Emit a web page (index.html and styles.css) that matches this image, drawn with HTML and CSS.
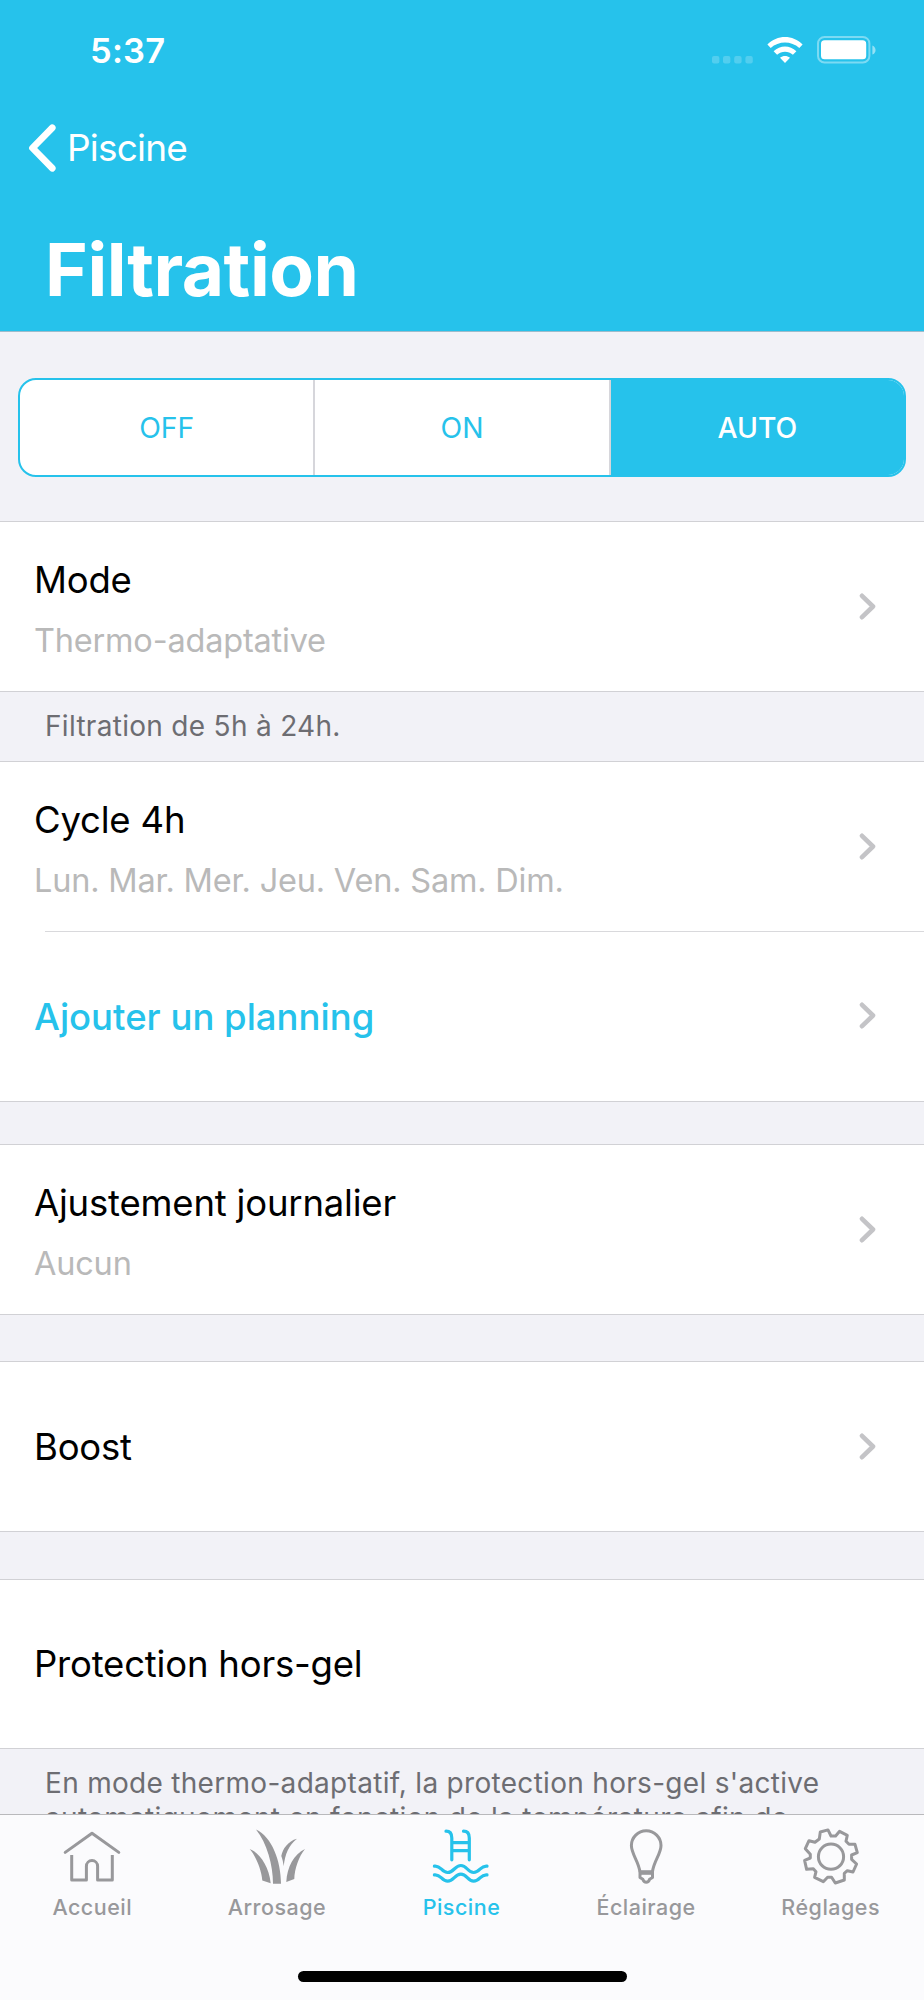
FILE: index.html
```
<!DOCTYPE html>
<html lang="fr">
<head>
    <meta charset="UTF-8">
    <meta name="viewport" content="width=device-width, initial-scale=1.0">
    <title>Filtration</title>
    <link rel="stylesheet" href="styles.css">
</head>
<body>
    <div class="app">
        <header class="header">
            <div class="status-bar">
                <span class="time">5:37</span>
                <div class="status-icons">
                    <svg class="signal" viewBox="0 0 42 8" width="42" height="8">
                        <rect x="0" y="0" width="7.4" height="7.4" rx="2"/>
                        <rect x="11" y="0" width="7.4" height="7.4" rx="2"/>
                        <rect x="22.2" y="0" width="7.4" height="7.4" rx="2"/>
                        <rect x="33.4" y="0" width="7.4" height="7.4" rx="2"/>
                    </svg>
                    <svg class="wifi" viewBox="0 0 36 27" width="36" height="27">
                        <path d="M0.4 7.6C10 -2.4 26 -2.4 35.6 7.6L32.3 11.1C24.3 3.7 11.7 3.7 3.7 11.1Z"/>
                        <path d="M6.6 14.2C13 7.8 23 7.8 29.4 14.2L25.9 17.7C21.4 13.7 14.6 13.7 10.1 17.7Z"/>
                        <path d="M13 20.8C16 18.3 20 18.3 23 20.8L18 26Z"/>
                    </svg>
                    <svg class="battery" viewBox="0 0 60 28" width="60" height="28">
                        <rect class="battery-frame" x="1" y="1" width="51.4" height="25.4" rx="6.5"/>
                        <rect x="4" y="4.3" width="45.2" height="19" rx="3.6"/>
                        <path class="battery-cap" d="M55.4 9.4C59.6 11 59.6 17 55.4 18.6Z"/>
                    </svg>
                </div>
            </div>
            <a class="back" href="#">
                <svg viewBox="0 0 28 48" width="28" height="48"><path d="M24.2 3.8L4.5 24L24.2 44.2"/></svg>
                <span>Piscine</span>
            </a>
            <h1>Filtration</h1>
        </header>

        <main class="content">
            <div class="segmented">
                <button type="button" class="segment">OFF</button>
                <button type="button" class="segment">ON</button>
                <button type="button" class="segment active">AUTO</button>
            </div>

            <section class="group">
                <a class="row detailed" href="#">
                    <div class="row-text">
                        <span class="title">Mode</span>
                        <span class="subtitle">Thermo-adaptative</span>
                    </div>
                    <svg class="chevron" viewBox="0 0 18 28" width="18" height="28"><path d="M3 2.8L14 13.5L3 24.2"/></svg>
                </a>
            </section>
            <p class="note note-short">Filtration de 5h à 24h.</p>

            <section class="group">
                <a class="row detailed" href="#">
                    <div class="row-text">
                        <span class="title">Cycle 4h</span>
                        <span class="subtitle">Lun. Mar. Mer. Jeu. Ven. Sam. Dim.</span>
                    </div>
                    <svg class="chevron" viewBox="0 0 18 28" width="18" height="28"><path d="M3 2.8L14 13.5L3 24.2"/></svg>
                </a>
                <a class="row separated" href="#">
                    <div class="row-text">
                        <span class="title action">Ajouter un planning</span>
                    </div>
                    <svg class="chevron" viewBox="0 0 18 28" width="18" height="28"><path d="M3 2.8L14 13.5L3 24.2"/></svg>
                </a>
            </section>

            <section class="group group-adjust">
                <a class="row detailed" href="#">
                    <div class="row-text">
                        <span class="title">Ajustement journalier</span>
                        <span class="subtitle">Aucun</span>
                    </div>
                    <svg class="chevron" viewBox="0 0 18 28" width="18" height="28"><path d="M3 2.8L14 13.5L3 24.2"/></svg>
                </a>
            </section>

            <section class="group group-boost">
                <a class="row" href="#">
                    <div class="row-text">
                        <span class="title">Boost</span>
                    </div>
                    <svg class="chevron" viewBox="0 0 18 28" width="18" height="28"><path d="M3 2.8L14 13.5L3 24.2"/></svg>
                </a>
            </section>

            <section class="group group-frost">
                <div class="row">
                    <div class="row-text">
                        <span class="title">Protection hors-gel</span>
                    </div>
                </div>
            </section>
            <p class="note note-long">En mode thermo-adaptatif, la protection hors-gel s'active<br>automatiquement en fonction de la température afin de</p>
        </main>

        <nav class="tab-bar">
            <div class="tabs">
                <a class="tab" href="#">
                    <svg viewBox="0 0 60 60" width="60" height="60">
                        <path d="M3.2 25.4L30 6.2L56.8 25.4" stroke-linecap="round"/>
                        <path d="M9.7 28V53H24.4V39.2a5.6 5.6 0 0 1 11.2 0V53H50.3V28"/>
                    </svg>
                    <span>Accueil</span>
                </a>
                <a class="tab" href="#">
                    <svg class="filled" viewBox="0 0 60 60" width="60" height="60">
                        <path d="M2.7 22C11 25 22 38 23.7 56.3L15.3 53.5C14.5 42 8 28 2.7 22Z"/>
                        <path d="M9 2.5C25 10 34 34 34 56.7H26C26 38 20 16 9 2.5Z"/>
                        <path d="M50 11.7C41 14 35.5 22 34.3 29C35.5 32 36.3 36 36.7 39.3C38 27 42 18 50 11.7Z"/>
                        <path d="M58 22C47 27 40 40 39.3 55L47.3 52C47.5 42 52 29 58 22Z"/>
                    </svg>
                    <span>Arrosage</span>
                </a>
                <a class="tab active" href="#">
                    <svg viewBox="0 0 60 60" width="60" height="60">
                        <path d="M15 4.2C19 4.2 20.8 6.5 20.8 11V32.8M32.5 4.2C36.5 4.2 38.3 6.5 38.3 11V32.8M20.8 15.7H38.3M20.8 23.7H38.3"/>
                        <path d="M3.4 39.2C10 38.2 10.5 45.5 16.7 45.5S23.7 38.5 29.9 38.5S36.5 45.5 42.7 45.5S49.5 38.2 56 39.2"/>
                        <path d="M3.4 47.9C10 46.9 10.5 54.2 16.7 54.2S23.7 47.2 29.9 47.2S36.5 54.2 42.7 54.2S49.5 46.9 56 47.9"/>
                    </svg>
                    <span>Piscine</span>
                </a>
                <a class="tab" href="#">
                    <svg viewBox="0 0 60 60" width="60" height="60">
                        <path d="M24 45C22.5 34 15.4 27 15.4 18.6a14.8 14.8 0 0 1 29.6 0C45 27 37.8 34 36.4 45"/>
                        <path d="M24 45V50.5L26.8 52.3C27.5 54.3 28.8 55.3 30.2 55.3S33 54.3 33.6 52.3L36.5 50.5V45Z"/>
                        <path d="M24 45.6H36.5" stroke-width="4.4"/>
                    </svg>
                    <span>Éclairage</span>
                </a>
                <a class="tab" href="#">
                    <svg viewBox="0 0 60 60" width="60" height="60">
                        <circle cx="30" cy="29.7" r="12.6"/>
                        <path d="M19.3 5L27 2.9L30 9H34.6L38.6 4.3L46.3 8.3L45 14.3L48 17.3H54L56.3 25.7L50.6 28V32.3L55.6 37L52 45L46.3 43.7L43.3 46.3V53L34.3 56L30.6 50.3H26.6L22.3 54.7L13.6 50.3L15 44.7L12.3 41.7L5.6 42.3L3.6 33.3L9.3 31V27.3L4.3 21.7L8 13.7L14 15.3L18.3 12Z"/>
                    </svg>
                    <span>Réglages</span>
                </a>
            </div>
            <div class="home-indicator"></div>
        </nav>
    </div>
</body>
</html>
```
FILE: styles.css
```
* {
    box-sizing: border-box;
}

body {
    margin: 0;
    font-family: Inter, 'Liberation Sans', sans-serif;
    background-color: #f2f2f7;
    color: #000;
}

a {
    color: inherit;
    text-decoration: none;
}

.app {
    height: 2000px;
    display: flex;
    flex-direction: column;
    overflow: hidden;
}

/* Header */
.header {
    flex: none;
    height: 332px;
    background-color: #26c2eb;
    border-bottom: 1px solid #9dbccb;
    color: #fff;
}

.status-bar {
    display: flex;
    justify-content: space-between;
    padding: 30px 47px 0 90px;
    height: 122px;
}

.time {
    font-size: 34.5px;
    line-height: 42px;
    font-weight: 600;
    letter-spacing: 0.2px;
}

.status-icons {
    display: flex;
    align-items: flex-start;
    fill: #fff;
}

.signal {
    margin: 26px 13px 0 0;
    opacity: 0.2;
}

.wifi {
    margin: 7px 14px 0 0;
}

.battery {
    margin-top: 6px;
}

.battery-frame {
    fill: none;
    stroke: #fff;
    stroke-width: 2;
    opacity: 0.4;
}

.battery-cap {
    opacity: 0.5;
}

.back {
    display: flex;
    align-items: center;
    padding-left: 28px;
    gap: 11px;
    height: 52px;
    font-size: 37px;
    line-height: 46px;
    letter-spacing: -0.8px;
}

.back svg {
    fill: none;
    stroke: #fff;
    stroke-width: 6.8;
    stroke-linecap: round;
    stroke-linejoin: round;
}

h1 {
    margin: 52px 0 0 45px;
    font-size: 73px;
    line-height: 88px;
    font-weight: 700;
    letter-spacing: -0.45px;
}

/* Segmented control */
.content {
    flex: 1;
    min-height: 0;
}

.segmented {
    display: flex;
    height: 99px;
    margin: 46px 18px 44px;
    border: 2px solid #26c2eb;
    border-radius: 18px;
    background-color: #fff;
    overflow: hidden;
}

.segment {
    flex: 1;
    padding: 0;
    border: none;
    background: none;
    color: #26c2eb;
    font-family: inherit;
    font-size: 28.3px;
}

.segment + .segment {
    border-left: 2px solid #d6d6db;
}

.segment.active {
    background-color: #26c2eb;
    color: #fff;
    font-weight: 500;
}

/* List */
.group {
    background-color: #fff;
    border-top: 1px solid #d1d1d5;
    border-bottom: 1px solid #d1d1d5;
}

.row {
    display: flex;
    align-items: center;
    justify-content: space-between;
    height: 169px;
    padding: 0 47px 0 34px;
}

.row-text {
    display: flex;
    flex-direction: column;
}

.detailed .row-text {
    padding-top: 7px;
}

.title {
    font-size: 36.5px;
    line-height: 60px;
    letter-spacing: -0.2px;
}

.subtitle {
    font-size: 32.5px;
    line-height: 61px;
    letter-spacing: -0.2px;
    color: #b9b9b9;
}

.action {
    padding-top: 2px;
    color: #26c2eb;
    font-weight: 500;
    letter-spacing: 0;
}

.separated {
    height: 170px;
    background: linear-gradient(#d9d9dc, #d9d9dc) 45px 0 / 100% 1px no-repeat;
}

.chevron {
    fill: none;
    stroke: #c4c4c7;
    stroke-width: 4.6;
    stroke-linecap: round;
    stroke-linejoin: round;
}

.group-adjust {
    margin-top: 42px;
}

.group-boost {
    margin-top: 46px;
}

.group-frost {
    margin-top: 47px;
}

.group-frost .row {
    height: 168px;
}

.note {
    margin: 0;
    padding: 0 45px;
    font-size: 28px;
    line-height: 35px;
    letter-spacing: 0.3px;
    color: #6d6d72;
}

.note-short {
    height: 69px;
    padding-top: 17px;
}

.note-long {
    padding-top: 17px;
    white-space: nowrap;
}

/* Tab bar */
.tab-bar {
    position: relative;
    flex: none;
    height: 186px;
    border-top: 1px solid #b9b9bc;
    background-color: #fbfbfd;
}

.tabs {
    display: flex;
    height: 156px;
    padding: 12px 1px 0 0;
}

.tab {
    flex: 1;
    display: flex;
    flex-direction: column;
    align-items: center;
    color: #98989b;
    font-size: 21.5px;
    font-weight: 500;
    line-height: 26px;
    letter-spacing: 0.5px;
}

.tab svg {
    margin-bottom: 7px;
    fill: none;
    stroke: currentColor;
    stroke-width: 3;
    stroke-linejoin: round;
}

.tab .filled {
    fill: currentColor;
    stroke: none;
}

.tab.active {
    color: #26c2eb;
}

.tab.active svg {
    stroke-width: 3.2;
    stroke-linecap: round;
}

.home-indicator {
    width: 329px;
    height: 11px;
    margin: 0 auto;
    border-radius: 6px;
    background-color: #000;
}
```
